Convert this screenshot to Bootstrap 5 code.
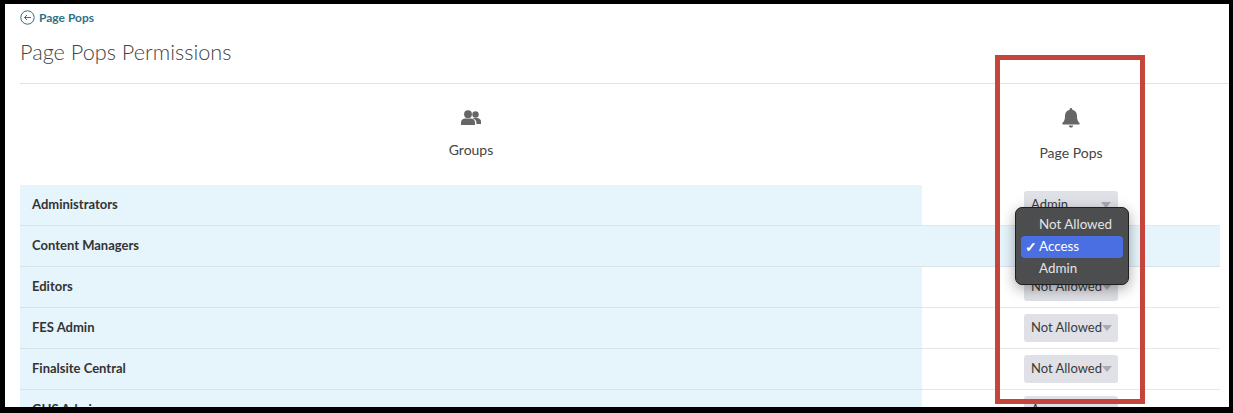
<!DOCTYPE html>
<html lang="en">
<head>
<meta charset="utf-8">
<title>Page Pops Permissions</title>
<link href="https://cdn.jsdelivr.net/npm/bootstrap@5.3.0/dist/css/bootstrap.min.css" rel="stylesheet">
<style>
html,body{height:413px;overflow:hidden;background:#000;}
body{font-family:Lato,"Open Sans",sans-serif;color:#333;font-size:14px;}
.shot-frame{position:relative;margin:4px 4px 0 5px;height:403px;background:#fff;overflow:hidden;padding:0 9px 0 15px;}
.back-link{height:27px;color:#2f7187;font-size:12px;font-weight:700;text-decoration:none;gap:4px;}
.page-title{font-size:21.7px;font-weight:300;color:#444;line-height:27px;margin:0;padding:8px 0 17px;border-bottom:1px solid #e2e2e2;margin-right:-9px;}
.perm-table{table-layout:fixed;width:1200px;margin:0;border-collapse:separate;border-spacing:0;}
.perm-table th,.perm-table td{padding:0;border:0;background:transparent;box-shadow:none;}
.perm-table thead th{height:101px;text-align:center;font-weight:400;font-size:14px;color:#444;vertical-align:top;}
.head-icon{height:22px;margin-top:23px;margin-bottom:10px;display:flex;justify-content:center;align-items:center;}
.head-icon-low{margin-bottom:13px;}
.perm-table .group-cell{background:#e6f4fc;height:41px;padding:0 0 0 12px;font-weight:700;font-size:13px;color:#333;border-bottom:1px solid #d9e4ea;vertical-align:middle;}
.perm-table .value-cell{height:41px;border-bottom:1px solid #e6e6e6;vertical-align:middle;text-align:center;}
.perm-table tr.row-hover .value-cell{background:#e6f4fc;border-bottom-color:#d9e4ea;}
.perm-select{width:94px;height:28px;background:#dfe1e7;border-radius:3px;padding:0 7px;font-size:13px;color:#3a3a3a;margin:0 auto;white-space:nowrap;}
.perm-caret{width:0;height:0;border-left:5px solid transparent;border-right:5px solid transparent;border-top:6px solid #a9abb2;flex:none;}
.perm-caret-tight{margin-left:-2px;margin-right:-1px;}
.red-frame{position:absolute;left:990px;top:51px;width:150px;height:349px;border:5px solid #c5443b;pointer-events:none;}
.native-menu{position:absolute;left:1010px;top:203px;width:114px;height:78px;background:#4b4d4f;border:1px solid #1f1f1f;border-radius:7px;padding:6px 5px;box-shadow:0 4px 14px rgba(0,0,0,.35);color:#e4e4e4;font-size:13.4px;}
.native-item{height:22px;line-height:21px;padding-left:18px;border-radius:4px;position:relative;white-space:nowrap;}
.native-item.is-active{background:#4a6fe3;color:#fff;}
.native-check{position:absolute;left:4px;top:0;font-size:14px;font-weight:700;}
</style>
</head>
<body>
<div class="shot-frame">
  <a class="back-link d-flex align-items-center" href="#">
    <svg width="15" height="15" viewBox="0 0 15 15" fill="none" stroke="#2f7187" stroke-width="1"><circle cx="7.5" cy="7.5" r="6.7"/><path d="M11 7.5H4.5M7 5L4.5 7.5 7 10"/></svg>
    <span>Page Pops</span>
  </a>
  <h1 class="page-title">Page Pops Permissions</h1>
  <table class="table perm-table">
    <colgroup><col style="width:902px"><col style="width:298px"></colgroup>
    <thead>
      <tr>
        <th>
          <div class="head-icon"><svg width="20" height="16" viewBox="0 0 20 16" fill="#666"><circle cx="7" cy="4.2" r="3.9"/><path d="M0 15v-2.5C0 10 2.3 8.6 4 8.6h6c1.800 0 4 1.400 4 3.900V15z"/><circle cx="14.500" cy="4.500" r="3.200"/><path d="M11.500 8.200c.8-.3 1.500-.3 2.200-.3h2.300c2 0 4 1.300 4 3.400V14h-4.600v-1.800c0-1.600-1.500-3-3.900-4z"/></svg></div>
          Groups
        </th>
        <th>
          <div class="head-icon head-icon-low"><svg width="18" height="20" viewBox="0 0 18 20" fill="#666"><path d="M9 0c.8 0 1.300.6 1.300 1.300v.5C13 2.400 15 4.800 15 7.700c0 4.500 1.200 5.900 2.500 7.200.5.500.2 1.500-.6 1.500H1.100c-.8 0-1.100-1-.6-1.500C1.800 13.600 3 12.200 3 7.700c0-2.900 2-5.300 4.700-5.900v-.5C7.700.6 8.200 0 9 0z"/><path d="M6.800 17.400h4.400c0 1.200-1 2.200-2.200 2.200s-2.200-1-2.200-2.200z"/></svg></div>
          Page Pops
        </th>
      </tr>
    </thead>
    <tbody>
      <tr><td class="group-cell">Administrators</td><td class="value-cell"><div class="perm-select d-flex align-items-center justify-content-between"><span>Admin</span><i class="perm-caret"></i></div></td></tr>
      <tr class="row-hover"><td class="group-cell">Content Managers</td><td class="value-cell"><div class="perm-select d-flex align-items-center justify-content-between"><span>Access</span><i class="perm-caret"></i></div></td></tr>
      <tr><td class="group-cell">Editors</td><td class="value-cell"><div class="perm-select d-flex align-items-center justify-content-between"><span>Not Allowed</span><i class="perm-caret perm-caret-tight"></i></div></td></tr>
      <tr><td class="group-cell">FES Admin</td><td class="value-cell"><div class="perm-select d-flex align-items-center justify-content-between"><span>Not Allowed</span><i class="perm-caret perm-caret-tight"></i></div></td></tr>
      <tr><td class="group-cell">Finalsite Central</td><td class="value-cell"><div class="perm-select d-flex align-items-center justify-content-between"><span>Not Allowed</span><i class="perm-caret perm-caret-tight"></i></div></td></tr>
      <tr><td class="group-cell">GHS Admins</td><td class="value-cell"><div class="perm-select d-flex align-items-center justify-content-between"><span>Access</span><i class="perm-caret"></i></div></td></tr>
    </tbody>
  </table>
  <div class="native-menu">
    <div class="native-item">Not Allowed</div>
    <div class="native-item is-active"><span class="native-check">✓</span>Access</div>
    <div class="native-item">Admin</div>
  </div>
  <div class="red-frame"></div>
</div>
<script src="https://cdn.jsdelivr.net/npm/bootstrap@5.3.0/dist/js/bootstrap.bundle.min.js"></script>
</body>
</html>
